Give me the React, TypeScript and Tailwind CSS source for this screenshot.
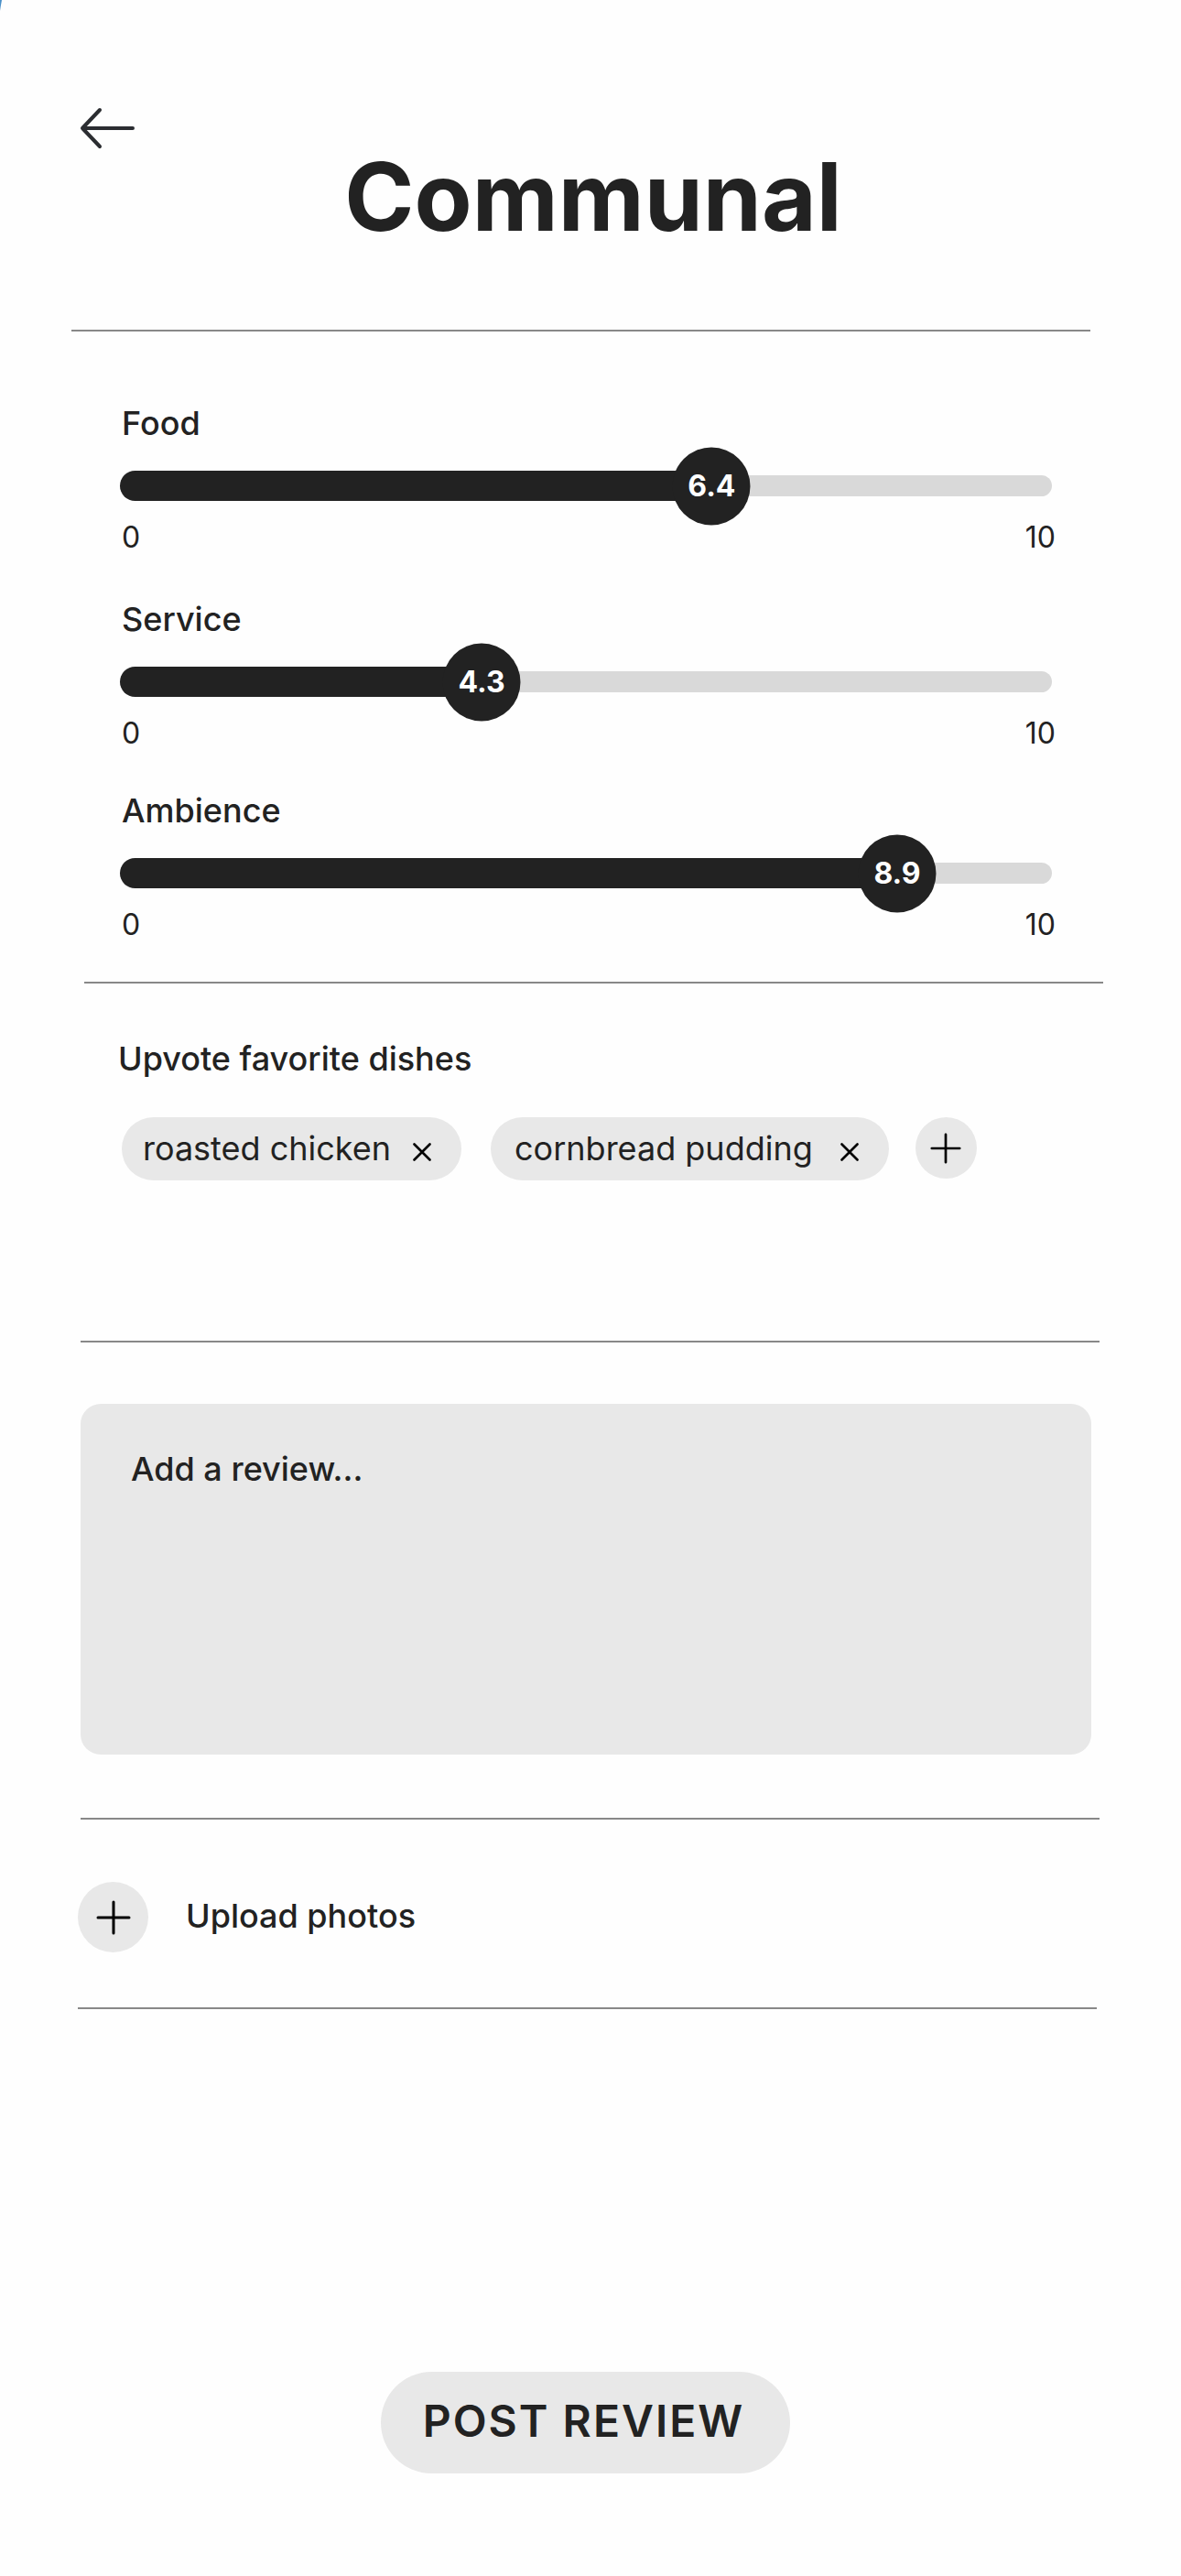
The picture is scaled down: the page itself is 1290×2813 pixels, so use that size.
import { useState } from "react";

const initialRatings = [
  { name: "Food", value: 6.4, shift: -0.5, className: "" },
  { name: "Service", value: 4.3, shift: -4.2, className: "mt-[47px]" },
  { name: "Ambience", value: 8.9, shift: -5.6, className: "mt-[42px]" },
];

const initialDishes = [
  { name: "roasted chicken", className: "gap-6 pl-[23px] pr-[33px]" },
  { name: "cornbread pudding", className: "gap-[30px] pl-[26px] pr-[33px]" },
];

type Rating = (typeof initialRatings)[number];
type Dish = (typeof initialDishes)[number];

function Plus({ className }: { className: string }) {
  return (
    <svg viewBox="0 0 38 38" className={className} fill="none" stroke="#000" strokeWidth="3" strokeLinecap="round" aria-hidden="true">
      <path d="M19 2v34M2 19h34" />
    </svg>
  );
}

function Divider({ className }: { className: string }) {
  return <hr className={`h-[2px] border-0 bg-[#888888] ${className}`} />;
}

function RatingSlider({ name, value: initial, shift, className }: Rating) {
  const [value, setValue] = useState(initial);
  const position = Math.min(100, Math.max(0, value * 10 + shift));
  const id = `rating-${name.toLowerCase()}`;
  return (
    <div className={className}>
      <label htmlFor={id} className="ml-[2px] block text-[36px] leading-[44px] font-medium">
        {name}
      </label>
      <div className="relative mt-[30px] flex h-[33px] items-center">
        <div className="h-[23px] w-full rounded-full bg-[#d9d9d9]" />
        <div className="absolute inset-y-0 left-0 rounded-full bg-[#222222]" style={{ width: `${position}%` }} />
        <div
          className="absolute top-1/2 flex size-[85px] -translate-x-1/2 -translate-y-1/2 items-center justify-center rounded-full bg-[#222222] text-[32px] font-bold text-white"
          style={{ left: `${position}%` }}
        >
          {value.toFixed(1)}
        </div>
        <input
          id={id}
          type="range"
          min="0"
          max="10"
          step="0.1"
          value={value}
          onChange={(e) => setValue(Number(e.target.value))}
          className="absolute inset-0 w-full cursor-pointer opacity-0"
        />
      </div>
      <div className="-mr-1 ml-[2px] mt-5 flex justify-between text-[32px] leading-[40px]">
        <span>0</span>
        <span>10</span>
      </div>
    </div>
  );
}

function DishTag({ name, className, onRemove }: Dish & { onRemove: () => void }) {
  return (
    <li className={`flex h-[69px] items-center rounded-full bg-[#e8e8e8] text-[36px] leading-[44px] ${className}`}>
      <span className="pb-[2px]">{name}</span>
      <button type="button" aria-label={`Remove ${name}`} onClick={onRemove} className="mt-[6px] cursor-pointer">
        <svg viewBox="0 0 20 20" className="size-5" fill="none" stroke="#000" strokeWidth="2.6" strokeLinecap="round" aria-hidden="true">
          <path d="M1.5 1.5l17 17M18.5 1.5l-17 17" />
        </svg>
      </button>
    </li>
  );
}

export default function App() {
  const [dishes, setDishes] = useState(initialDishes);
  const remove = (name: string) => setDishes(dishes.filter((d) => d.name !== name));

  return (
    <main className="relative min-h-screen bg-[#fefefe] pb-[112px] font-['Inter',sans-serif] text-[#222222]">
      <svg viewBox="0 0 2 12" className="absolute left-0 top-0 h-3 w-[2px]" aria-hidden="true">
        <path d="M0 0h2Q1 5 0 12z" fill="#4a90c8" />
      </svg>

      <header className="pt-[116px]">
        <button type="button" aria-label="Back" className="ml-[85px] block cursor-pointer">
          <svg viewBox="0 0 64 48" className="h-12 w-16" fill="none" stroke="#2b2d31" strokeWidth="4" strokeLinecap="round" strokeLinejoin="round" aria-hidden="true">
            <path d="M60 24H5M24 4L5 24L24 44" />
          </svg>
        </button>
        <h1 className="mt-px pl-[6px] text-center text-[103px] leading-[100px] font-bold">Communal</h1>
      </header>

      <Divider className="ml-[78px] mr-[99px] mt-[95px]" />

      <section aria-label="Ratings" className="ml-[131px] mr-[141px] mt-[78px] flex flex-col">
        {initialRatings.map((r) => (
          <RatingSlider key={r.name} {...r} />
        ))}
      </section>

      <Divider className="ml-[92px] mr-[85px] mt-[42px]" />

      <section className="ml-[129px] mr-[141px] mt-[60px]">
        <h2 className="text-[36px] leading-[44px] font-medium">Upvote favorite dishes</h2>
        <div className="ml-1 mt-[42px] flex">
          <ul className="flex gap-8">
            {dishes.map((d) => (
              <DishTag key={d.name} {...d} onRemove={() => remove(d.name)} />
            ))}
          </ul>
          <button type="button" aria-label="Add dish" className="ml-[29px] flex size-[67px] cursor-pointer items-center justify-center rounded-full bg-[#e8e8e8]">
            <Plus className="size-[34px]" />
          </button>
        </div>
      </section>

      <Divider className="ml-[88px] mr-[89px] mt-[175px]" />

      <textarea
        aria-label="Review"
        placeholder="Add a review..."
        className="ml-[88px] mr-[98px] mt-[67px] block h-[383px] w-[calc(100%-186px)] resize-none rounded-[22px] bg-[#e8e8e8] px-[55px] py-[49px] text-[36px] leading-[44px] font-medium outline-none placeholder:text-[#222222] placeholder:opacity-100"
      />

      <Divider className="ml-[88px] mr-[89px] mt-[69px]" />

      <button type="button" className="ml-[85px] mt-[68px] flex cursor-pointer items-center gap-[41px] text-[36px] leading-[44px] font-medium">
        <span className="flex size-[77px] items-center justify-center rounded-full bg-[#e8e8e8]">
          <Plus className="size-[38px]" />
        </span>
        <span className="pb-[3px]">Upload photos</span>
      </button>

      <Divider className="ml-[85px] mr-[92px] mt-[60px]" />

      <div className="mr-[11px] mt-[396px] flex justify-center">
        <button type="button" className="h-[111px] cursor-pointer rounded-full bg-[#e8e8e8] pb-[3px] pl-[46px] pr-[50px] text-[48px] leading-[58px] font-semibold tracking-[2px]">
          POST REVIEW
        </button>
      </div>
    </main>
  );
}
